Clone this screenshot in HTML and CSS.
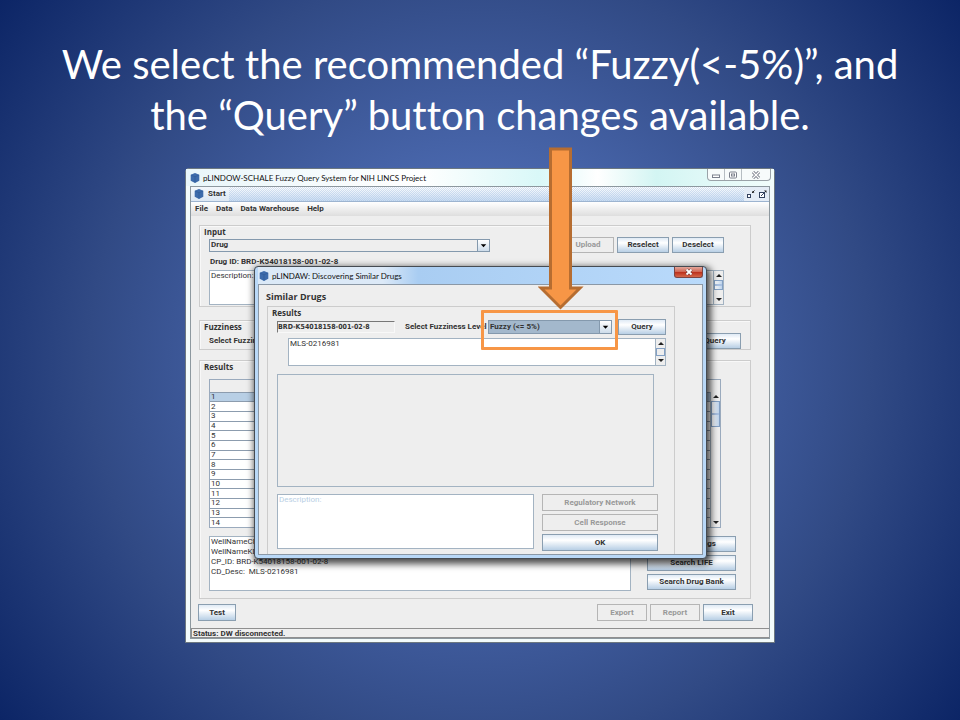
FILE: index.html
```html
<!DOCTYPE html>
<html lang="en">
<head>
<meta charset="utf-8">
<title>pLINDOW-SCHALE Fuzzy Query</title>
<link rel="stylesheet" href="styles.css">
</head>
<body>
<main class="slide">
  <h1 class="headline">We select the recommended “Fuzzy(&lt;-5%)”, and the “Query” button changes available.</h1>
  <div class="stage">
    <section class="window">
      <header class="titlebar">
        <svg class="cube" viewBox="0 0 10 10"><path d="M5 0L9.300 1.800V7.800L5 10L.7 7.800V1.800Z" fill="#3d6bab"/><path d="M1 2L5 3.800L9 2M5 3.800V9.600" stroke="#2f5b9a" stroke-width=".7" fill="none"/></svg>
        <span class="caption">pLINDOW-SCHALE Fuzzy Query System for NIH LINCS Project</span>
        <div class="winbuttons">
          <button aria-label="Minimize"><svg viewBox="0 0 10 8"><rect x="1.500" y="4" width="7" height="2.500" fill="#fff" stroke="#7b808c"/></svg></button>
          <button aria-label="Maximize"><svg viewBox="0 0 10 8"><rect x="1.500" y="1" width="7" height="6" rx="1" fill="#fff" stroke="#7b808c"/><rect x="3.500" y="3" width="3" height="2" fill="#fff" stroke="#7b808c"/></svg></button>
          <button class="wide" aria-label="Close"><svg viewBox="0 0 10 8"><path d="M2 1L8 7M8 1L2 7" stroke="#6f7482" stroke-width="3"/><path d="M2 1L8 7M8 1L2 7" stroke="#fff" stroke-width="1.300"/></svg></button>
        </div>
      </header>
      <div class="client">
        <div class="startbar">
          <span class="starttab"><svg class="cube" viewBox="0 0 10 10"><path d="M5 0L9.300 1.800V7.800L5 10L.7 7.800V1.800Z" fill="#3d6bab"/><path d="M1 2L5 3.800L9 2M5 3.800V9.600" stroke="#2f5b9a" stroke-width=".7" fill="none"/></svg>Start</span>
          <span class="starttools">
            <svg viewBox="0 0 9 9"><rect x="1.500" y="4.500" width="3" height="3" fill="#fff" stroke="#33415e"/><path d="M6 1V3H8.500Z" fill="#222"/><path d="M6 3L8.500 .5" stroke="#222"/></svg>
            <svg viewBox="0 0 9 9"><rect x="1.500" y="2.500" width="5" height="5" fill="#fff" stroke="#33415e"/><path d="M3 6L8 1" stroke="#33415e"/><path d="M6 .5H8.500V3Z" fill="#222"/></svg>
          </span>
        </div>
        <nav class="menu"><a href="#">File</a><a href="#">Data</a><a href="#">Data Warehouse</a><a href="#">Help</a></nav>
        <div class="content">
          <section class="group input">
            <h2>Input</h2>
            <div class="row">
              <span class="combo drug"><select aria-label="Input type"><option>Drug</option></select><svg viewBox="0 0 12 12"><path d="M3 4.500H9L6 8Z"/></svg></span>
              <span class="push"></span>
              <button class="btn w52" disabled>Upload</button>
              <button class="btn w52">Reselect</button>
              <button class="btn w52">Deselect</button>
            </div>
            <label class="drugid" for="desc">Drug ID: BRD-K54018158-001-02-8</label>
            <div class="scroller">
              <textarea id="desc">Description:</textarea>
              <div class="bar"><i class="up"></i><b class="thumb"></b><i class="down"></i></div>
            </div>
          </section>
          <section class="group fuzz">
            <h2>Fuzziness</h2>
            <div class="row"><span class="fuzzlabel">Select Fuzziness Level</span><button class="btn w52">Query</button></div>
          </section>
          <section class="group results">
            <h2>Results</h2>
            <div class="tablebox">
              <table>
                <thead><tr><th></th></tr></thead>
                <tbody><tr class="sel"><td>1</td></tr><tr><td>2</td></tr><tr><td>3</td></tr><tr><td>4</td></tr><tr><td>5</td></tr><tr><td>6</td></tr><tr><td>7</td></tr><tr><td>8</td></tr><tr><td>9</td></tr><tr><td>10</td></tr><tr><td>11</td></tr><tr><td>12</td></tr><tr><td>13</td></tr><tr><td>14</td></tr></tbody>
              </table>
              <div class="tablescroll"><div class="bar"><i class="up"></i><b class="thumb"></b><i class="down"></i></div></div>
            </div>
            <div class="detail">
              <textarea aria-label="Details">WellNameCP:
WellNameKD:
CP_ID: BRD-K54018158-001-02-8
CD_Desc:  MLS-0216981</textarea>
              <div class="stack">
                <button class="btn">Similar Drugs</button>
                <button class="btn">Search LIFE</button>
                <button class="btn">Search Drug Bank</button>
              </div>
            </div>
          </section>
          <div class="actions">
            <button class="btn test">Test</button><span class="push"></span>
            <button class="btn" disabled>Export</button><button class="btn" disabled>Report</button><button class="btn">Exit</button>
          </div>
        </div>
        <footer class="status">Status: DW disconnected.</footer>
      </div>
    </section>

    <section class="dialog" role="dialog" aria-label="Discovering Similar Drugs">
      <header class="dlgtitle">
        <svg class="cube" viewBox="0 0 10 10"><path d="M5 0L9.300 1.800V7.800L5 10L.7 7.800V1.800Z" fill="#3d6bab"/><path d="M1 2L5 3.800L9 2M5 3.800V9.600" stroke="#2f5b9a" stroke-width=".7" fill="none"/></svg>
        <span class="caption">pLINDAW: Discovering Similar Drugs</span>
        <button class="close" aria-label="Close"><svg viewBox="0 0 10 8"><path d="M2.500 1.500L7.500 6.500M7.500 1.500L2.500 6.500" stroke="#6d3a3a" stroke-width="3"/><path d="M2.500 1.500L7.500 6.500M7.500 1.500L2.500 6.500" stroke="#fff" stroke-width="1.800"/></svg></button>
      </header>
      <div class="dlgbody">
        <h2 class="dlghead">Similar Drugs</h2>
        <div class="dlggroup">
          <h3>Results</h3>
          <div class="query">
            <input class="drugfield" aria-label="Drug" value="BRD-K54018158-001-02-8" readonly>
            <label for="level">Select Fuzziness Level</label>
            <span class="combo level"><select id="level"><option>Fuzzy (&lt;= 5%)</option></select><svg viewBox="0 0 12 12"><path d="M3 4.500H9L6 8Z"/></svg></span>
            <button class="btn">Query</button>
          </div>
          <div class="scroller mls">
            <textarea aria-label="Matches">MLS-0216981</textarea>
            <div class="bar"><i class="up"></i><b class="thumb plain"></b><i class="down"></i></div>
          </div>
          <div class="canvas"></div>
          <div class="lower">
            <textarea aria-label="Description" placeholder="Description:"></textarea>
            <div class="stack">
              <button class="btn" disabled>Regulatory Network</button>
              <button class="btn" disabled>Cell Response</button>
              <button class="btn">OK</button>
            </div>
          </div>
        </div>
      </div>
    </section>
    <div class="highlight"></div>
    <svg class="arrow" viewBox="0 0 46 164"><path d="M12.500 2H32.500V141H42L22.500 160.500L3 141H12.500Z" fill="#f79646" stroke="#b66d31" stroke-width="3"/></svg>
  </div>
</main>
</body>
</html>
```
FILE: styles.css
```css
* { box-sizing: border-box; }
body { margin: 0; font: 8px/10px Roboto, "Liberation Sans", Arial, sans-serif; color: #333; }
h1, h2, h3 { margin: 0; }
button, input, select, textarea { font: inherit; color: inherit; margin: 0; border-radius: 0; }
.slide {
  min-height: 100vh;
  padding-top: 39px;
  background: radial-gradient(circle at 50% 50%, #5475bf 0, #4a68ae 30%, #314a85 65%, #0c2566 100%);
}
.headline {
  max-width: 864px;
  margin: 0 auto;
  height: 129px;
  font: 400 40px/51px Lato, "Open Sans", sans-serif;
  font-variant-ligatures: none;
  color: #fff;
  text-align: center;
}
.stage { position: relative; max-width: 590px; margin: 0 auto; }
.cube { width: 10px; height: 10px; flex: none; }
.push { flex: 1; }
.row { display: flex; align-items: center; }

.window {
  border: 1px solid #6d7880;
  border-radius: 4px 4px 0 0;
  background: #f3fbfb;
  padding: 0 4px 3px;
}
.titlebar {
  display: flex;
  align-items: center;
  gap: 3px;
  height: 17px;
  margin: 0 -4px;
  padding-left: 4px;
  background: linear-gradient(90deg, #e9f6fa, #fff 40%, #d9f8f8 60%, #fff 70%, #d3f5f3 80%, #f2fdfc);
}
.caption { color: #111; flex: 1; font-family: Lato, "Open Sans", sans-serif; }
.winbuttons { display: flex; align-self: flex-start; height: 12px; margin-right: 3px; border: 1px solid #9aa2a8; border-top: 0; border-radius: 0 0 4px 4px; background: #f7fbfb; }
.winbuttons button { width: 17px; padding: 0; border: 0; border-right: 1px solid #b6bdc2; background: none; line-height: 0; }
.winbuttons button.wide { width: 28px; border-right: 0; }
.winbuttons svg { width: 10px; height: 8px; }
.client { border: 1px solid #8d989f; background: #eee; }
.startbar {
  display: flex;
  justify-content: space-between;
  height: 15px;
  border-bottom: 1px solid #9db4d0;
  background: repeating-conic-gradient(rgba(163, 190, 225, .45) 0 25%, transparent 0 50%) 0 0 / 2px 2px, linear-gradient(#fff, #c9dcf2);
}
.starttab { display: flex; align-items: center; gap: 4px; padding: 0 3px; background: linear-gradient(#f4f8fc, #dce7f3); font-weight: 700; }
.starttools { display: flex; align-items: center; gap: 3px; padding: 0 2px; background: #e4ecf6; }
.starttools svg { width: 9px; height: 9px; }
.menu { display: flex; gap: 8px; height: 14px; padding: 2px 4px; background: linear-gradient(#fff, #dedede); font-weight: 700; }
.menu a { color: #333; text-decoration: none; }

.content { padding: 9px 18px 7px 8px; }
.group { border: 1px solid #ccc; padding: 1px 9px 0; box-shadow: inset 1px 1px #f8f8f8; }
.group h2, .dlggroup h3 { font: 700 8px/10px "Open Sans", "Noto Sans", sans-serif; margin-left: -5px; }
.btn { height: 16px; padding: 0; border: 1px solid #8a9eb0; background: linear-gradient(#dfeaf5, #fff 35%, #b8cfe5); font-weight: 700; line-height: 10px; text-align: center; white-space: nowrap; }
.btn:disabled { border-color: #b5b5b5; background: #eee; color: #999; }
.w52 { width: 52px; }
.combo { display: flex; height: 13px; border: 1px solid #8499ad; background: #eee; }
.combo select { flex: 1; min-width: 0; appearance: none; border: 0; padding: 0 0 0 1px; background: none; font-weight: 700; line-height: 10px; }
.combo svg { width: 12px; height: 100%; border-left: 1px solid #8499ad; background: linear-gradient(#fff, #cddcea); flex: none; }
.input { height: 82px; }
.input .row { gap: 3px; margin: 0 17px 0 0; }
.drug { width: 281px; }
.drugid { display: block; margin: 4px 0 3px 1px; font-weight: 700; }
textarea { display: block; resize: none; overflow: hidden; padding: 0 0 0 1px; border: 1px solid #a3b3c2; background: #fff; }
.scroller { display: flex; height: 35px; margin-right: 17px; border: 1px solid #a3b3c2; background: #fff; }
.scroller textarea { flex: 1; min-width: 0; border: 0; height: 100%; }
.bar { display: flex; flex-direction: column; width: 10px; border-left: 1px solid #a3b3c2; background: #eee; }
.bar i { display: flex; align-items: center; justify-content: center; height: 9px; }
.bar i::before { content: ""; border: 3px solid transparent; }
.bar .up::before { border-top: 0; border-bottom-color: #222; }
.bar .down { margin-top: auto; }
.bar .down::before { border-bottom: 0; border-top-color: #222; }
.thumb { height: 10px; border: 1px solid #83a0c4; background: linear-gradient(transparent 40%, #a9c1e2 40% 60%, transparent 60%), linear-gradient(90deg, #fff, #bcd2ea); }
.thumb.plain { height: 8px; background: #eee; }
.fuzz { height: 30px; margin-top: 13px; }
.fuzz .row { justify-content: space-between; margin-top: 1px; }
.fuzzlabel { font-weight: 700; }
.results { height: 239px; margin-top: 10px; }
.results h2 { margin-bottom: 7px; }
.tablebox { display: flex; height: 149px; margin-right: 20px; border: 1px solid #9aaabd; }
table { flex: 1; height: 147px; border-collapse: collapse; background: #fff; line-height: 8px; }
thead tr { height: 12px; background: #eee; }
th, td { padding: 0 0 0 1px; border-bottom: 1px solid #8c9cae; }
tbody tr:last-child td { border-bottom: 0; }
.sel { background: #b8cfe5; }
.tablescroll { display: flex; padding-top: 12px; background: #eee; }
.tablescroll .thumb { height: 26px; background: linear-gradient(transparent 45%, #a9c1e2 45% 55%, transparent 55%), linear-gradient(90deg, #fff, #bcd2ea); }
.detail { display: flex; justify-content: space-between; margin: 8px 5px 0 0; }
.detail textarea { width: 422px; height: 55px; white-space: pre; }
.stack { display: flex; flex-direction: column; gap: 3px; }
.detail .stack { width: 89px; }
.actions { display: flex; gap: 3px; margin: 5px -2px 0 -1px; }
.actions .btn { width: 50px; height: 17px; }
.actions .test { width: 38px; }
.status { height: 10px; border: 1px solid #8f8f8f; border-right: 0; padding-left: 1px; font-weight: 700; line-height: 9px; }

.dialog {
  position: absolute;
  top: 98px;
  left: 69px;
  right: 68px;
  border: 1px solid #454b52;
  border-radius: 4px;
  padding: 0 3px 3px;
  background: #b9d8f7;
  box-shadow: 2px 3px 7px 2px rgba(0, 0, 0, .7);
}
.dlgtitle { display: flex; align-items: center; gap: 3px; height: 17px; padding-left: 1px; background: linear-gradient(90deg, #dbe9f7, #dce9f7 28%, #a9cdf2 36%, #b9dafb); }
.close { align-self: flex-start; width: 29px; height: 11px; padding: 0; border: 1px solid #7b4443; border-top: 0; border-radius: 0 0 3px 3px; background: linear-gradient(#e3a79b, #d06a58 45%, #bb2d1a 50%, #d4674a); line-height: 0; }
.close svg { width: 10px; height: 8px; }
.dlgbody { border: 1px solid #8b98a6; background: #eee; padding: 6px 27px 0 7px; }
.dlghead { font: 700 9px/12px "Open Sans", "Noto Sans", sans-serif; }
.dlggroup { margin: 3px 0 0 1px; padding: 1px 8px 3px 9px; border: 1px solid #ccc; border-bottom: 0; }
.query { display: flex; align-items: center; height: 17px; font-weight: 700; }
.drugfield { width: 118px; height: 12px; padding: 0; border: 1px solid #f8f8f8; border-top-color: #777; border-left-color: #777; background: #eee; font: 700 7px/10px "DejaVu Sans Condensed", "DejaVu Sans", sans-serif; }
.query label { flex: 1; margin-left: 10px; white-space: nowrap; }
.level { width: 124px; height: 14px; background: #a3b8cc; margin-right: 6px; }
.query .btn { width: 48px; }
.mls { height: 28px; margin: 3px 0 0 11px; }
.canvas { height: 113px; margin: 8px 12px 7px 0; border: 1px solid #a3b3c2; }
.lower { display: flex; gap: 8px; margin-right: 8px; }
.lower textarea { flex: 1; height: 55px; }
.lower textarea::placeholder { color: #b8cfe5; opacity: 1; }
.lower .stack { width: 116px; }
.lower .btn { height: 17px; }
.highlight { position: absolute; left: 296px; top: 142px; width: 137px; height: 40px; border: 3px solid #f79646; border-radius: 1px; }
.arrow { position: absolute; left: 353px; top: -21px; width: 46px; height: 164px; }
```
